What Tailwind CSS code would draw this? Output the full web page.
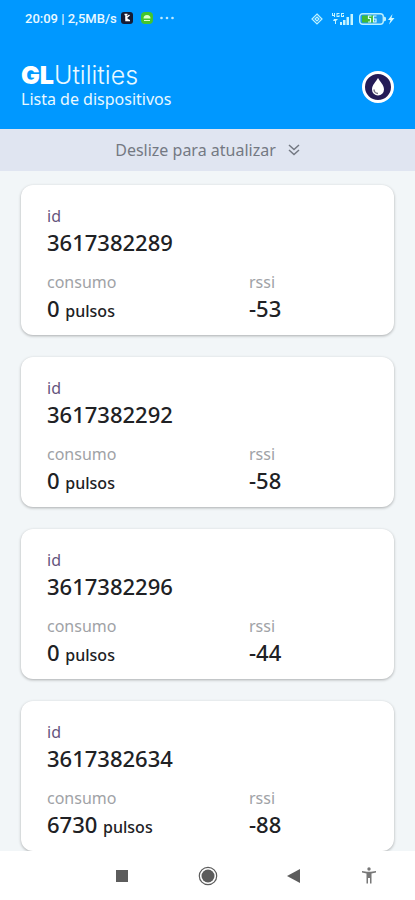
<!DOCTYPE html>
<html lang="pt-BR">

<head>
    <meta charset="UTF-8">
    <meta name="viewport" content="width=device-width, initial-scale=1.0">
    <title>GLUtilities</title>
    <script src="https://cdn.jsdelivr.net/npm/@tailwindcss/browser@4"></script>
</head>

<body class="flex h-screen flex-col overflow-hidden bg-[#f2f6f8] font-['Noto_Sans',sans-serif] text-[#202124]">

    <header class="shrink-0 bg-[#0098ff] text-[#e9f9ff]">
        <!-- Status bar -->
        <div class="flex h-[37px] items-center justify-between pr-5 pl-[25px] font-[Roboto,sans-serif] text-xs font-medium">
            <div class="flex items-center gap-1">
                <span class="text-[13px]">20:09 | 2,5MB/s</span>
                <svg class="size-3" viewBox="0 0 12 12">
                    <rect width="12" height="12" rx="3" fill="#151c35" />
                    <path d="M3.5 2.5h3M5 2.5v6h4M8.5 3L5 6l3 2.5" fill="none" stroke="#fff" stroke-width="1.5" />
                </svg>
                <svg class="ml-1 size-3" viewBox="0 0 12 12">
                    <rect width="12" height="12" rx="4" fill="#43c52d" />
                    <path d="M2.5 6.5a3.5 3.5 0 0 1 7 0z" fill="#d9ffcb" />
                    <path d="M3 8.5h6" stroke="#d9ffcb" />
                </svg>
                <svg class="ml-0.5 h-3 w-4" viewBox="0 0 16 12" fill="#bfeaff">
                    <circle cx="2.5" cy="6" r="1.3" />
                    <circle cx="8" cy="6" r="1.3" />
                    <circle cx="13.5" cy="6" r="1.3" />
                </svg>
            </div>
            <div class="flex items-center">
                <svg class="size-3" viewBox="0 0 12 12" fill="none" stroke="#bdf2ff">
                    <path d="M6 1L11 6L6 11L1 6z" stroke-width="1.2" />
                    <path d="M6 4l2 2l-2 2l-2-2z" stroke-width="1.2" />
                </svg>
                <svg class="ml-2 h-3 w-6" viewBox="0 0 24 12" fill="#c5f5ff">
                    <path d="M1 0h1v2h1V0h1v4H3V3H1zM5.5 0h3v1h-2v2h1V2h1v2h-3zM10 0h3v1h-2v2h1V2h1v2h-3zM3 6h4L5 8v3H4V8H2z" />
                    <path d="M9 9h2v3H9zM12 7h2.5v5H12zM15.5 4H18v8h-2.5zM19.5 1H22v11h-2.5z" />
                </svg>
                <svg class="ml-1 h-3 w-7" viewBox="0 0 28 12">
                    <rect x=".7" y=".7" width="23.6" height="10.6" rx="3" fill="#1b9df3" stroke="#b9f0ff" stroke-width="1.4" />
                    <path d="M3 2.5h12v7H3z" fill="#3fba37" />
                    <path d="M12.500 3H9.500v2.500h2V9H9M17.500 3H14.500v6h2.500V6h-2.500" fill="none" stroke="#d9fbff" stroke-width="1.2" />
                    <path d="M25 3.5l2 1v3l-2 1z" fill="#b9f0ff" />
                </svg>
                <svg class="h-3 w-2" viewBox="0 0 8 12" fill="#d3f8ff">
                    <path d="M5.5 1L1 7h2.5L2 11.5L7.5 5H4.5z" />
                </svg>
            </div>
        </div>

        <!-- App bar -->
        <div class="flex items-center justify-between px-[21px] pt-6 pb-5">
            <div>
                <h1 class="font-[Inter,sans-serif] text-[25px] leading-7 font-light"><span class="font-black text-white">GL</span>Utilities</h1>
                <p class="leading-5">Lista de dispositivos</p>
            </div>
            <button type="button" aria-label="Água" class="mt-1 flex size-8 items-center justify-center rounded-full border-3 border-white bg-[#241b57]">
                <svg class="h-5 w-4" viewBox="0 0 16 20">
                    <path d="M8 1C10 4.500 14 8 14 12.500a6 6 0 0 1-12 0C2 8 6 4.500 8 1z" fill="#fff" />
                    <path d="M4 12.500a4 4 0 0 0 4 4" fill="none" stroke="#777487" stroke-width="1.5" />
                </svg>
            </button>
        </div>
    </header>

    <div class="flex h-[42px] shrink-0 items-center justify-center gap-3 bg-[#e0e5f1] text-[#747983]">
        <span>Deslize para atualizar</span>
        <svg class="size-3" viewBox="0 0 12 12" fill="none" stroke="currentColor" stroke-width="1.5">
            <path d="M1 1l5 4.500L11 1M1 6l5 4.500L11 6" />
        </svg>
    </div>

    <!-- Devices -->
    <main class="flex min-h-0 flex-1 flex-col gap-[22px] overflow-hidden px-[21px] pt-3.5">
        <section class="shrink-0 rounded-xl bg-white px-[26px] pt-[19px] pb-3 shadow-[0_1px_3px_#0000004d]">
            <p class="leading-6 text-[#66557d]">id</p>
            <p class="text-[22px] leading-7 font-medium">3617382289</p>
            <dl class="mt-3.5 grid grid-cols-[202px_1fr]">
                <div>
                    <dt class="leading-6 text-[#a0a2a6]">consumo</dt>
                    <dd class="text-[22px] leading-7 font-medium">0 <span class="text-base">pulsos</span></dd>
                </div>
                <div>
                    <dt class="leading-6 text-[#a0a2a6]">rssi</dt>
                    <dd class="text-[22px] leading-7 font-medium">-53</dd>
                </div>
            </dl>
        </section>

        <section class="shrink-0 rounded-xl bg-white px-[26px] pt-[19px] pb-3 shadow-[0_1px_3px_#0000004d]">
            <p class="leading-6 text-[#66557d]">id</p>
            <p class="text-[22px] leading-7 font-medium">3617382292</p>
            <dl class="mt-3.5 grid grid-cols-[202px_1fr]">
                <div>
                    <dt class="leading-6 text-[#a0a2a6]">consumo</dt>
                    <dd class="text-[22px] leading-7 font-medium">0 <span class="text-base">pulsos</span></dd>
                </div>
                <div>
                    <dt class="leading-6 text-[#a0a2a6]">rssi</dt>
                    <dd class="text-[22px] leading-7 font-medium">-58</dd>
                </div>
            </dl>
        </section>

        <section class="shrink-0 rounded-xl bg-white px-[26px] pt-[19px] pb-3 shadow-[0_1px_3px_#0000004d]">
            <p class="leading-6 text-[#66557d]">id</p>
            <p class="text-[22px] leading-7 font-medium">3617382296</p>
            <dl class="mt-3.5 grid grid-cols-[202px_1fr]">
                <div>
                    <dt class="leading-6 text-[#a0a2a6]">consumo</dt>
                    <dd class="text-[22px] leading-7 font-medium">0 <span class="text-base">pulsos</span></dd>
                </div>
                <div>
                    <dt class="leading-6 text-[#a0a2a6]">rssi</dt>
                    <dd class="text-[22px] leading-7 font-medium">-44</dd>
                </div>
            </dl>
        </section>

        <section class="shrink-0 rounded-xl bg-white px-[26px] pt-[19px] pb-3 shadow-[0_1px_3px_#0000004d]">
            <p class="leading-6 text-[#66557d]">id</p>
            <p class="text-[22px] leading-7 font-medium">3617382634</p>
            <dl class="mt-3.5 grid grid-cols-[202px_1fr]">
                <div>
                    <dt class="leading-6 text-[#a0a2a6]">consumo</dt>
                    <dd class="text-[22px] leading-7 font-medium">6730 <span class="text-base">pulsos</span></dd>
                </div>
                <div>
                    <dt class="leading-6 text-[#a0a2a6]">rssi</dt>
                    <dd class="text-[22px] leading-7 font-medium">-88</dd>
                </div>
            </dl>
        </section>
    </main>

    <!-- Android navigation -->
    <nav class="flex h-[49px] shrink-0 items-center justify-between bg-white pr-9 pl-28 text-[#5c5c5c]">
        <div class="flex items-center gap-[66px]">
            <button type="button" aria-label="Recentes">
                <svg class="size-5" viewBox="0 0 20 20" fill="currentColor">
                    <path d="M4 4h12v12H4z" />
                </svg>
            </button>
            <button type="button" aria-label="Início">
                <svg class="size-5" viewBox="0 0 20 20">
                    <circle cx="10" cy="10" r="8.7" fill="none" stroke="currentColor" stroke-width="1.2" />
                    <circle cx="10" cy="10" r="6.5" fill="currentColor" />
                </svg>
            </button>
            <button type="button" aria-label="Voltar">
                <svg class="size-5" viewBox="0 0 20 20" fill="currentColor">
                    <path d="M16 3v14L3 10z" />
                </svg>
            </button>
        </div>
        <button type="button" aria-label="Acessibilidade">
            <svg class="size-5" viewBox="0 0 20 20" fill="#777">
                <circle cx="10" cy="3" r="1.7" />
                <path d="M3 5l5 .8h4L17 5v1.500L12.500 7.500v10H11V12H9v5.500H7.500v-10L3 6.500z" />
            </svg>
        </button>
    </nav>

</body>

</html>
